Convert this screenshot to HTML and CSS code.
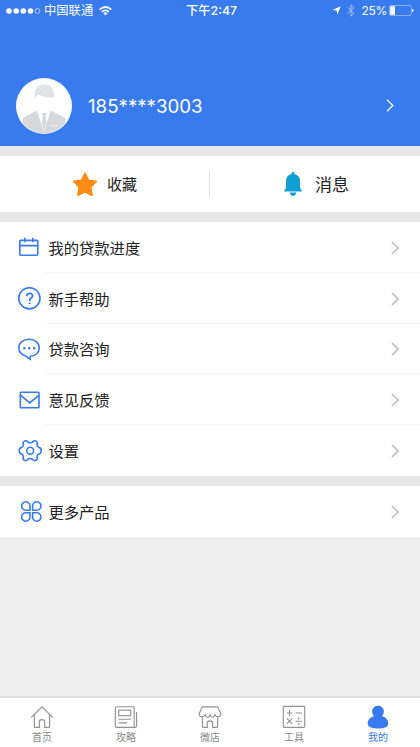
FILE: index.html
```html
<!DOCTYPE html>
<html lang="zh-CN">
<head>
<meta charset="utf-8">
<meta name="viewport" content="width=device-width, initial-scale=1">
<title>我的</title>
<link rel="stylesheet" href="styles.css">
</head>
<body>
<div class="app">
  <header class="header">
    <div class="status">
      <div class="status-left">
        <svg width="35" height="8" viewBox="0 0 35 8" fill="#fff"><circle cx="3" cy="4" r="2.8"/><circle cx="10.2" cy="4" r="2.8"/><circle cx="17.3" cy="4" r="2.8"/><circle cx="24.5" cy="4" r="2.8"/><circle cx="31.5" cy="4" r="2.4" fill="none" stroke="#fff" stroke-width=".6"/></svg>
        <span class="carrier">中国联通</span>
        <svg class="wifi" width="13" height="10" viewBox="0 0 13 10" fill="none" stroke="#fff" stroke-width="1.7"><path d="M.7 3.6Q6.5-1.6 12.3 3.6M2.9 5.9Q6.5 2.7 10.1 5.9"/><path d="M4.3 7.3Q6.5 5.4 8.7 7.3L6.5 9.6Z" fill="#fff" stroke="none"/></svg>
      </div>
      <div class="clock">下午2:47</div>
      <div class="status-right">
        <svg width="9" height="9" viewBox="0 0 9 9"><path d="M8.8.3L5.2 8.7 4.7 4.6.3 4.1Z" fill="#fff"/></svg>
        <svg class="bluetooth" width="8" height="13" viewBox="0 0 8 13" fill="none" stroke="#a9c6fa" stroke-width="1"><path d="M.7 3.5L7 9.2 4 12.2V.8L7 3.8.7 9.5"/></svg>
        <span class="percent">25%</span>
        <svg class="battery" width="25" height="11" viewBox="0 0 25 11"><rect x=".5" y=".5" width="21.8" height="10" rx="1.3" fill="none" stroke="#9bbdf9" stroke-width=".8"/><path d="M1.2 1.2H6v8.6H1.2Z" fill="#fff"/><path d="M23.1 3.7Q24.5 4 24.5 5.5T23.1 7.3Z" fill="#fff"/></svg>
      </div>
    </div>
    <div class="profile">
      <svg class="avatar" width="56" height="56" viewBox="0 0 56 56">
        <defs><clipPath id="round"><circle cx="28" cy="28" r="27.2"/></clipPath></defs>
        <circle cx="28" cy="28" r="28" fill="#fff"/>
        <g clip-path="url(#round)">
          <path d="M18.5 20C18 11 22 6.5 28.5 6.5S39 11 38 20L36.8 19.7Q28 19.5 22.5 16.5Q20 17 19.6 19.5Z" fill="#e2e3e5"/>
          <path d="M6.5 40L21 32.5 28 49 34.5 32.5 49.5 40V56H6.5Z" fill="#d7d8da"/>
          <path d="M21 33L28 54 34.5 33Z" fill="#fff"/>
          <path d="M26 35H30.5L29.6 38 30.5 44 28 53 25.8 44 27 38Z" fill="#d7d8da"/>
          <path d="M34 47.8H42" stroke="#eceded" stroke-width="1.2"/>
        </g>
      </svg>
      <span class="phone">185****3003</span>
      <svg class="profile-arrow" width="8" height="13" viewBox="0 0 8 13" fill="none" stroke="#fff" stroke-width="1.2"><path d="M1 .8L6.8 6.5 1 12.2"/></svg>
    </div>
  </header>

  <section class="shortcuts">
    <div class="shortcut favorites">
      <svg width="26" height="25" viewBox="0 0 26 25"><path d="M13 1.4L16.4 8.4 24.1 9.4 18.6 15 19.9 23.2 13 19.7 6 23.2 7.3 15 1.8 9.4 9.6 8.4Z" fill="#ff8b12" stroke="#ff8b12" stroke-width="1.8" stroke-linejoin="round"/></svg>
      <span>收藏</span>
    </div>
    <div class="shortcut messages">
      <svg width="20" height="26" viewBox="0 0 20 26" fill="#109fd2"><path d="M10 .8Q11.5.8 11.5 3Q17 4.5 17 10V15.5Q17 18 19.2 20.4H.8Q3 18 3 15.5V10Q3 4.5 8.5 3Q8.5.8 10 .8Z"/><path d="M6.7 21.6H13.3Q12.5 25 10 25T6.7 21.6Z"/></svg>
      <span>消息</span>
    </div>
  </section>

  <ul class="menu">
    <li class="row">
      <svg class="icon" width="24" height="24" viewBox="0 0 24 24"><rect x="1.8" y="4.4" width="18" height="14.8" rx="1"/><path d="M1.8 9.6H19.8M6.9 1.7V6.3M14.9 1.7V6.3"/></svg>
      <div class="line"><span>我的贷款进度</span><svg class="arrow" width="9" height="14" viewBox="0 0 9 14"><path d="M1 1L7.3 7 1 13"/></svg></div>
    </li>
    <li class="row">
      <svg class="icon" width="24" height="24" viewBox="0 0 24 24"><circle cx="11.4" cy="11.3" r="10.6"/><path class="bold" d="M8.6 9.2Q8.6 6.3 11.6 6.3T14.5 8.9Q14.5 10.3 12.8 11.3Q11.6 12.1 11.6 13.3V13.9"/><circle class="solid" cx="11.6" cy="16.2" r="1"/></svg>
      <div class="line"><span>新手帮助</span><svg class="arrow" width="9" height="14" viewBox="0 0 9 14"><path d="M1 1L7.3 7 1 13"/></svg></div>
    </li>
    <li class="row">
      <svg class="icon" width="24" height="24" viewBox="0 0 24 24"><path d="M7.5 18C3.5 16.7.8 13.7.8 10 .8 4.9 5.3 1.2 11 1.2S21.2 4.9 21.2 10 17 18.1 12.2 18.3V21.3Z"/><g class="solid"><circle cx="6.3" cy="10.2" r="1.2"/><circle cx="11.2" cy="10.2" r="1.2"/><circle cx="16.2" cy="10.2" r="1.2"/></g></svg>
      <div class="line"><span>贷款咨询</span><svg class="arrow" width="9" height="14" viewBox="0 0 9 14"><path d="M1 1L7.3 7 1 13"/></svg></div>
    </li>
    <li class="row">
      <svg class="icon" width="24" height="24" viewBox="0 0 24 24"><rect x="2.3" y="3.2" width="18.7" height="15.6" rx=".7"/><path d="M2.7 6.4L11.7 13.9 20.7 6.4"/></svg>
      <div class="line"><span>意见反馈</span><svg class="arrow" width="9" height="14" viewBox="0 0 9 14"><path d="M1 1L7.3 7 1 13"/></svg></div>
    </li>
    <li class="row">
      <svg class="icon" width="24" height="24" viewBox="0 0 24 24"><g transform="translate(0 -.8)"><path d="M10 3.1Q12.2 4 14.4 3.1Q16 .8 18 1.9Q20 3 19.1 5Q18.8 7.3 20.8 8.2Q23.2 8.6 23.2 11.5T20.8 14.8Q18.8 15.7 19.1 18Q20 20 18 21.1Q16 22.2 14.4 19.9Q12.2 19 10 19.9Q8.4 22.2 6.4 21.1Q4.4 20 5.3 18Q5.6 15.7 3.6 14.8Q1.2 14.4 1.2 11.5T3.6 8.2Q5.6 7.3 5.3 5Q4.4 3 6.4 1.9Q8.4 .8 10 3.1Z"/><circle cx="12.2" cy="11.5" r="3.4"/></g></svg>
      <div class="line"><span>设置</span><svg class="arrow" width="9" height="14" viewBox="0 0 9 14"><path d="M1 1L7.3 7 1 13"/></svg></div>
    </li>
  </ul>

  <ul class="menu more">
    <li class="row">
      <svg class="icon" width="24" height="24" viewBox="0 0 24 24"><path d="M12 10.2H7.9A4.2 4.2 0 1 1 12 6ZM14.6 10.2H18.7A4.2 4.2 0 1 0 14.6 6ZM12 12.8H7.9A4.2 4.2 0 1 0 12 17ZM14.6 12.8H18.7A4.2 4.2 0 1 1 14.6 17Z"/></svg>
      <div class="line"><span>更多产品</span><svg class="arrow" width="9" height="14" viewBox="0 0 9 14"><path d="M1 1L7.3 7 1 13"/></svg></div>
    </li>
  </ul>

  <nav class="tabs">
    <div class="tab"><svg width="24" height="24" viewBox="0 0 24 24"><path d="M1.3 12.4L12 1.8 22.7 12.4M4.4 9.6V21.7Q4.4 22.3 5 22.3H9.3V16.8Q9.3 14.6 12 14.6T14.7 16.8V22.3H19Q19.6 22.3 19.6 21.7V9.6"/></svg><span>首页</span></div>
    <div class="tab"><svg width="24" height="24" viewBox="0 0 24 24"><path d="M21.4 22.3H2.5Q1.3 22.3 1.3 21V2.8Q1.3 1.7 2.5 1.7H19.1Q20.2 1.7 20.2 2.8V20.5Q20.2 22.3 21.4 22.3T22.6 20.5V7M4.6 14.2H16.8M4.6 17.8H13.2"/><rect x="4.7" y="5.2" width="12" height="5.5"/></svg><span>攻略</span></div>
    <div class="tab"><svg width="24" height="24" viewBox="0 0 24 24"><path d="M4.4 1.8H19.6L22.8 8.4Q23 11.7 20.2 11.7T16.7 9.8Q15.5 12.5 14.3 12.5T12 9.8Q10.9 12.5 9.6 12.5T7.3 9.8Q6.5 11.7 3.8 11.7T1.2 8.4ZM4.4 12V21.7Q4.4 22.3 5 22.3H9.3V18Q9.3 15.8 12 15.8T14.7 18V22.3H19Q19.6 22.3 19.6 21.7V12"/></svg><span>微店</span></div>
    <div class="tab"><svg width="24" height="24" viewBox="0 0 24 24"><rect x="1.3" y="1.4" width="21.4" height="21" rx=".8"/><path d="M4.5 8H10.5M7.5 5V11M13.5 8H20M4.8 13.3L10.3 18.8M10.3 13.3L4.8 18.8M13.5 16.2H20"/><circle class="dot" cx="16.7" cy="13.5" r=".9"/><circle class="dot" cx="16.7" cy="18.9" r=".9"/></svg><span>工具</span></div>
    <div class="tab active"><svg width="24" height="24" viewBox="0 0 24 24"><path d="M12 .7C15.5.7 17.9 3.3 17.9 6.4Q17.9 8.8 16 11.3C20 12.2 22.3 15.3 22.3 18.8Q22.3 23.6 12 23.6T1.7 18.8C1.7 15.3 4 12.2 8 11.3Q6.1 8.8 6.1 6.4C6.1 3.3 8.5.7 12 .7Z"/></svg><span>我的</span></div>
  </nav>
</div>
</body>
</html>
```
FILE: styles.css
```css
* { box-sizing: border-box; }
body {
  margin: 0;
  font-family: "Noto Sans CJK SC", sans-serif;
  color: #222;
}
svg { display: block; flex: none; }
.app {
  height: 747px;
  display: flex;
  flex-direction: column;
  background: #eee;
  overflow: hidden;
}
.header {
  height: 146px;
  flex: none;
  background: #387bee;
  color: #fff;
}
.status {
  height: 21px;
  display: grid;
  grid-template-columns: 1fr auto 1fr;
  align-items: center;
  padding: 0 6px;
  font-family: Inter, "Noto Sans CJK SC", sans-serif;
  font-size: 12.3px;
  line-height: 20px;
}
.status-left, .status-right { display: flex; align-items: center; }
.carrier { margin-left: 3px; padding-top: 1px; }
.wifi { margin-left: 6px; }
.clock { font-weight: 500; margin-left: 3px; padding-top: 1px; }
.status-right { justify-content: flex-end; }
.bluetooth { margin-left: 6px; }
.percent { margin-left: 7px; font-size: 12px; letter-spacing: -0.3px; }
.battery { margin-left: 2px; }
.profile {
  display: flex;
  align-items: center;
  height: 56px;
  margin-top: 57px;
  padding: 0 26px 0 16px;
}
.phone {
  margin-left: 16px;
  font-family: Inter, sans-serif;
  font-size: 18.7px;
}
.profile-arrow { margin: 0 0 1px auto; }
.shortcuts {
  height: 76px;
  flex: none;
  display: flex;
  align-items: center;
  background: #fff;
  border-top: 10px solid #e7e7e7;
  border-bottom: 10px solid #e7e7e7;
}
.shortcut { display: flex; align-items: center; }
.shortcut span { margin-bottom: 2px; }
.favorites {
  width: 210px;
  height: 26px;
  padding-left: 72px;
  gap: 9px;
  font-size: 15px;
  border-right: 1px solid #e1e7e7;
}
.messages { padding-left: 73px; gap: 12px; font-size: 17px; }
.menu {
  margin: 0;
  padding: 0;
  list-style: none;
  flex: none;
  background: #fff;
}
.more { border-top: 10px solid #e7e7e7; }
.row {
  height: 50.8px;
  display: flex;
  align-items: center;
  padding-left: 18px;
}
.icon {
  margin-top: 2px;
  fill: none;
  stroke: #387bee;
  stroke-width: 1.6;
}
.icon .solid { fill: #387bee; stroke: none; }
.icon .bold { stroke-width: 1.8; }
.line {
  flex: 1;
  height: 100%;
  margin-left: 4px;
  padding: 0 20px 0 2.4px;
  display: flex;
  align-items: center;
  justify-content: space-between;
  border-bottom: 1px solid #f4f4f4;
  font-size: 15.3px;
}
.row:last-child .line { border-bottom-color: transparent; }
.arrow { margin-top: 2px; fill: none; stroke: #c7c7cc; stroke-width: 1.8; }
.tabs {
  height: 51px;
  flex: none;
  margin-top: auto;
  display: flex;
  background: #fff;
  border-top: 2px solid #dfdfdf;
}
.tab {
  flex: 1;
  display: flex;
  flex-direction: column;
  align-items: center;
  padding-top: 7px;
  font-size: 10px;
  line-height: 15px;
  color: #888;
}
.tab svg { fill: none; stroke: #929292; stroke-width: 1.15; }
.tab .dot { fill: #929292; stroke: none; }
.tab.active { color: #387bee; }
.tab.active svg { fill: #387bee; stroke: none; }
```
